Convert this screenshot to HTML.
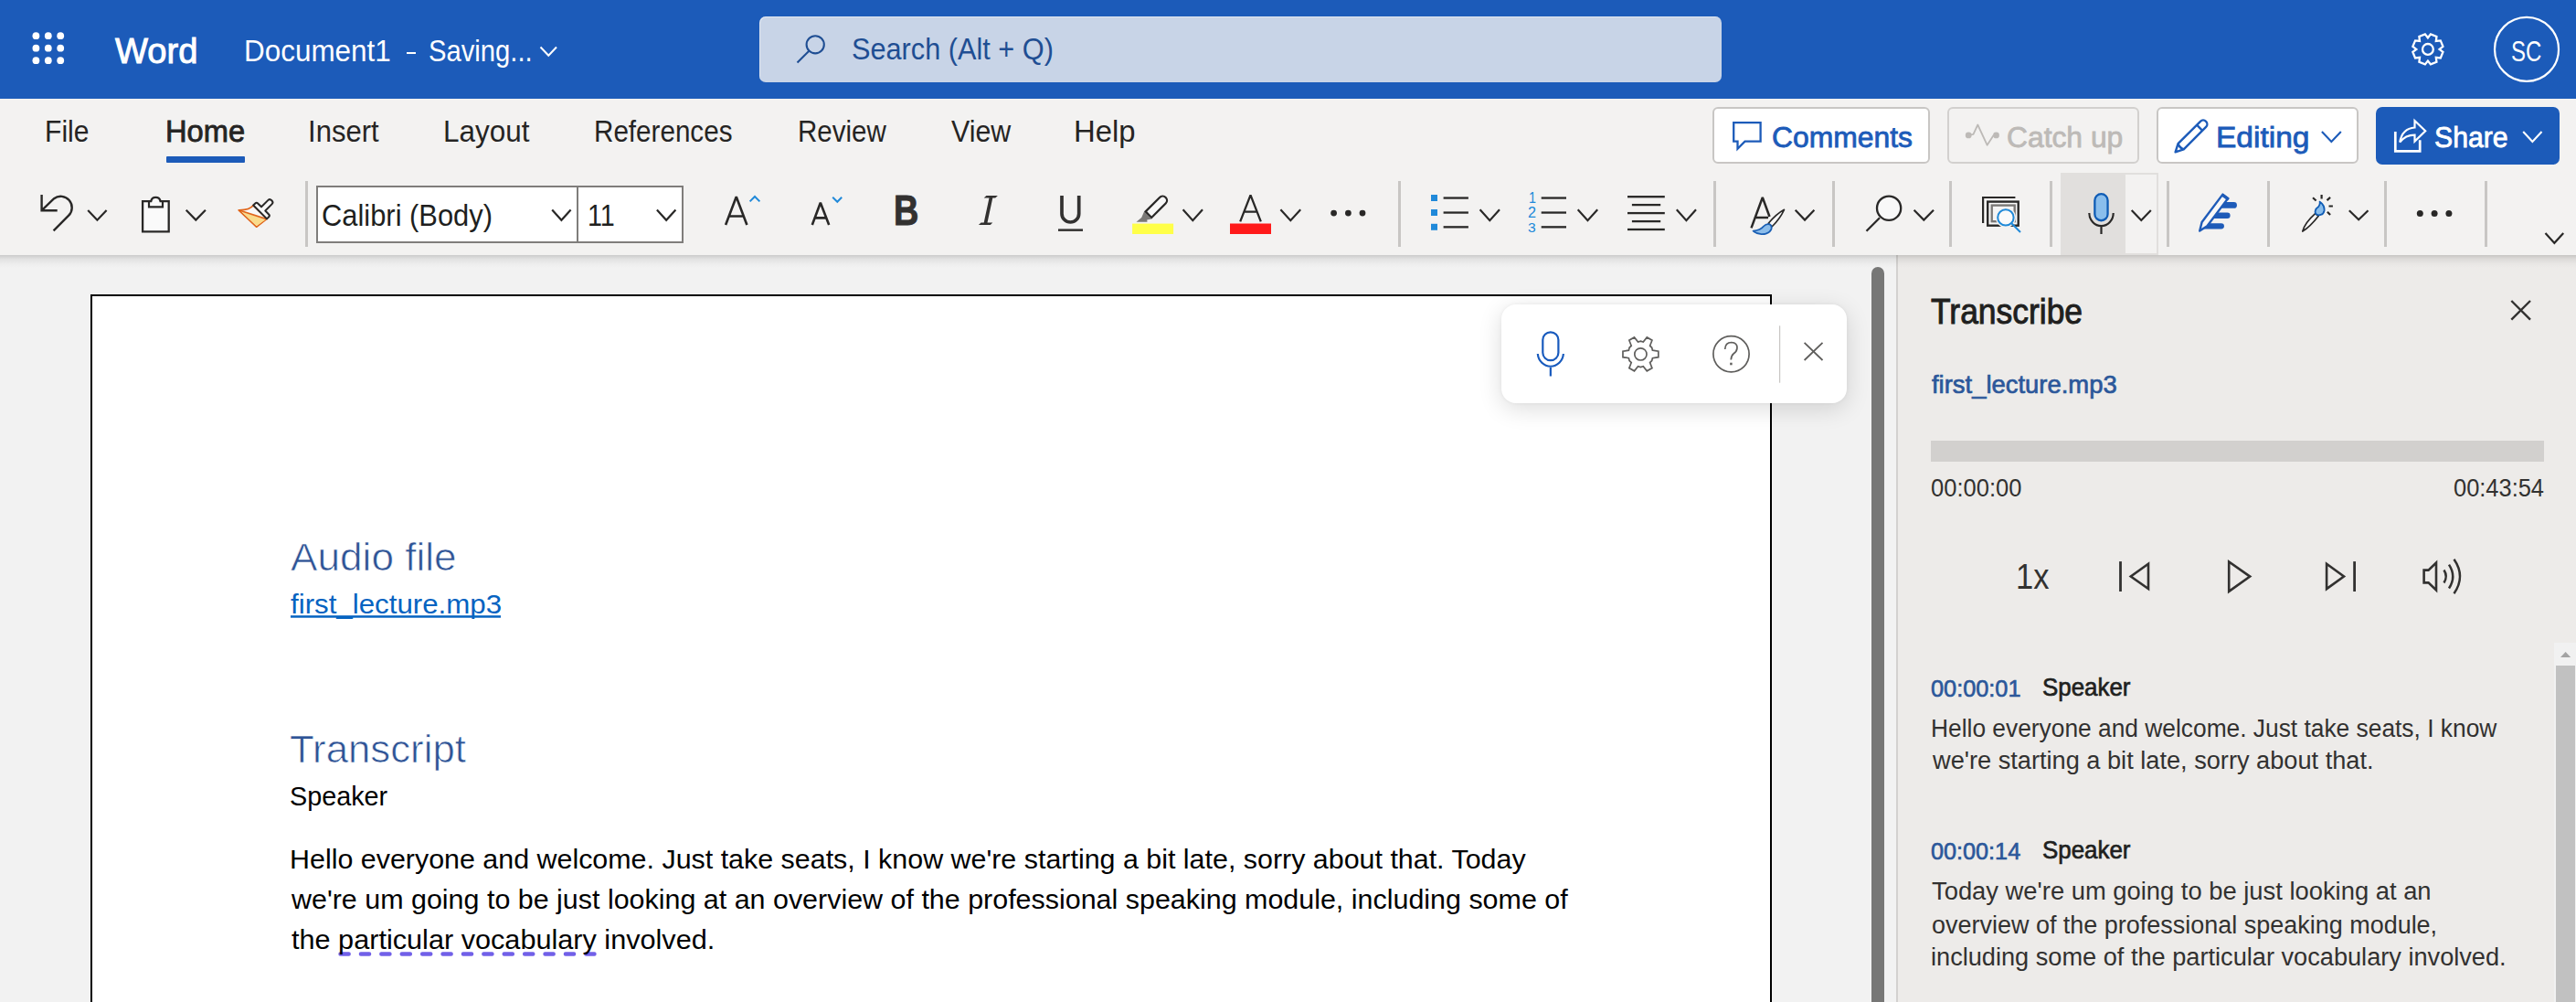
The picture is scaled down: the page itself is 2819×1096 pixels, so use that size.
<!DOCTYPE html><html><head><meta charset="utf-8"><style>
html,body{margin:0;padding:0;}
body{width:2819px;height:1096px;overflow:hidden;position:relative;background:#f2f2f2;font-family:'Liberation Sans',sans-serif;}
.t{position:absolute;white-space:nowrap;transform-origin:0 0;}
.abs{position:absolute;}
svg{position:absolute;left:0;top:0;overflow:visible;}
</style></head><body>
<div class="abs" style="left:0;top:0;width:2819px;height:108px;background:#1c5bb9"></div>
<div class="abs" style="left:0;top:108px;width:2819px;height:171px;background:#f3f2f1;z-index:2"></div>
<div class="abs" style="left:0;top:279px;width:2819px;height:14px;background:linear-gradient(rgba(0,0,0,0.16),rgba(0,0,0,0.07) 30%,rgba(0,0,0,0.02) 70%,rgba(0,0,0,0));z-index:3"></div>
<div class="abs" style="left:831px;top:18px;width:1053px;height:72px;background:#c8d4e7;border-radius:7px;box-shadow:inset 1px 1px 0 rgba(255,255,255,0.45)"></div>
<div class="abs" style="left:99px;top:322px;width:1836px;height:800px;background:#fff;border:2px solid #000;"></div>
<div class="abs" style="left:2075px;top:279px;width:744px;height:817px;background:#edebe9;border-left:2px solid #d3d1cf;box-sizing:border-box"></div>
<div class="abs" style="left:2048px;top:292px;width:14px;height:820px;background:#777776;border-radius:7px"></div>
<div class="abs" style="left:1643px;top:333px;width:378px;height:108px;background:#fff;border-radius:16px;box-shadow:0 6px 26px rgba(0,0,0,0.14),0 0 4px rgba(0,0,0,0.05);z-index:3"></div>
<div class="abs" style="left:2113px;top:482px;width:671px;height:23px;background:#d2d0ce"></div>
<div class="abs" style="left:2795px;top:703px;width:24px;height:400px;background:#f1f1f1"></div>
<div class="abs" style="left:2797px;top:728px;width:21px;height:400px;background:#c1c1c1"></div>
<div class="abs" style="left:0;top:0;z-index:4"><div class="abs" style="left:182px;top:171px;width:86px;height:7px;background:#1c5bb9;border-radius:1px"></div><div class="abs" style="left:1874px;top:117px;width:238px;height:62px;background:#fff;border:2px solid #c8c6c4;border-radius:6px;box-sizing:border-box"></div><div class="abs" style="left:2131px;top:117px;width:210px;height:62px;background:#f3f2f1;border:2px solid #d2d0ce;border-radius:6px;box-sizing:border-box"></div><div class="abs" style="left:2360px;top:117px;width:221px;height:62px;background:#fff;border:2px solid #c8c6c4;border-radius:6px;box-sizing:border-box"></div><div class="abs" style="left:2600px;top:117px;width:201px;height:63px;background:#1c5bb9;border-radius:7px"></div><div class="abs" style="left:346px;top:203px;width:402px;height:63px;background:#fff;border:2px solid #7f7d7b;box-sizing:border-box"></div><div class="abs" style="left:631px;top:203px;width:2px;height:63px;background:#7f7d7b"></div><div class="abs" style="left:2255px;top:189px;width:107px;height:90px;background:#e1dfdd"></div><div class="abs" style="left:2326px;top:191px;width:34px;height:86px;background:#f3f2f1"></div><div class="abs" style="left:333.7px;top:198px;width:3px;height:72px;background:#c8c6c4"></div><div class="abs" style="left:1529.8px;top:198px;width:3px;height:72px;background:#c8c6c4"></div><div class="abs" style="left:1874.9px;top:198px;width:3px;height:72px;background:#c8c6c4"></div><div class="abs" style="left:2004.9px;top:198px;width:3px;height:72px;background:#c8c6c4"></div><div class="abs" style="left:2132.5px;top:198px;width:3px;height:72px;background:#c8c6c4"></div><div class="abs" style="left:2243.0px;top:198px;width:3px;height:72px;background:#c8c6c4"></div><div class="abs" style="left:2370.5px;top:198px;width:3px;height:72px;background:#c8c6c4"></div><div class="abs" style="left:2480.9px;top:198px;width:3px;height:72px;background:#c8c6c4"></div><div class="abs" style="left:2608.5px;top:198px;width:3px;height:72px;background:#c8c6c4"></div><div class="abs" style="left:2718.8px;top:198px;width:3px;height:72px;background:#c8c6c4"></div></div>
<svg width="2819" height="1096" style="z-index:5"><circle cx="39.4" cy="39.2" r="3.9" fill="#fff"/><circle cx="39.4" cy="52.7" r="3.9" fill="#fff"/><circle cx="39.4" cy="66.2" r="3.9" fill="#fff"/><circle cx="52.8" cy="39.2" r="3.9" fill="#fff"/><circle cx="52.8" cy="52.7" r="3.9" fill="#fff"/><circle cx="52.8" cy="66.2" r="3.9" fill="#fff"/><circle cx="66.2" cy="39.2" r="3.9" fill="#fff"/><circle cx="66.2" cy="52.7" r="3.9" fill="#fff"/><circle cx="66.2" cy="66.2" r="3.9" fill="#fff"/><path d="M591.5,51.5 L600.25,60.8 L609,51.5" fill="none" stroke="#fff" stroke-width="2"/><circle cx="892.2" cy="48.8" r="9.6" fill="none" stroke="#1f4e93" stroke-width="2.1"/><path d="M885.3,55.7 L872.5,68.5" stroke="#1f4e93" stroke-width="2.1"/><path d="M2669.50,53.90 L2673.42,56.96 L2670.75,63.42 L2665.81,62.81 L2666.42,67.75 L2659.96,70.42 L2656.90,66.50 L2653.84,70.42 L2647.38,67.75 L2647.99,62.81 L2643.05,63.42 L2640.38,56.96 L2644.30,53.90 L2640.38,50.84 L2643.05,44.38 L2647.99,44.99 L2647.38,40.05 L2653.84,37.38 L2656.90,41.30 L2659.96,37.38 L2666.42,40.05 L2665.81,44.99 L2670.75,44.38 L2673.42,50.84 Z" fill="none" stroke="#fff" stroke-width="2.3" stroke-linejoin="miter"/><circle cx="2656.9" cy="53.9" r="5.9" fill="none" stroke="#fff" stroke-width="2.3"/><circle cx="2765" cy="53.9" r="35" fill="none" stroke="#fff" stroke-width="2.2"/><path d="M45.6,213 V230.2 H62.7 M46.2,229.6 L59.1,217.2 A12.3,12.3 0 0 1 75.2,235.7 L58.6,252.3" fill="none" stroke="#292827" stroke-width="2.4"/><path d="M96.2,230 L106.4,240.7 L116.6,230" fill="none" stroke="#292827" stroke-width="2.2"/><path d="M156.1,253.3 V220.2 H165.2 A5.3,5.3 0 0 1 175.6,220.2 H184.7 V253.3 Z" fill="#fafafa" stroke="#292827" stroke-width="2.3" stroke-linejoin="miter"/><path d="M163,221 V226.3 H178 V221" fill="none" stroke="#292827" stroke-width="2.2"/><path d="M203.7,229.8 L214.3,240.6 L224.9,229.8" fill="none" stroke="#292827" stroke-width="2.2"/><g transform="translate(287.1,229.5) rotate(45)"><path d="M-10.5,3.5 Q-9.3,10 -18.1,18.5 L8.6,17.8 L10.5,3.5 Z" fill="#f8f8f8" stroke="#e0661b" stroke-width="1.8" stroke-linejoin="round"/><path d="M-15.5,17.6 L9.9,5.2 L8.2,17 Z" fill="#f9db8b"/><path d="M-17.5,18.2 L10.3,4" stroke="#e0661b" stroke-width="1.8"/><path d="M-10.5,3.5 V0.5 Q-10.5,-1.5 -8.5,-1.5 H-3 V-12 Q-3,-14.5 0,-14.5 Q3,-14.5 3,-12 V-1.5 H8.5 Q10.5,-1.5 10.5,0.5 V3.5 Z" fill="#f8f8f8" stroke="#292827" stroke-width="2" stroke-linejoin="round"/></g><path d="M794.1,246 L805.75,215.2 L817.4,246 M797.6,236.5 H814" fill="none" stroke="#292827" stroke-width="2.6" stroke-linejoin="bevel"/><path d="M820.6,220.4 L826,215 L831.4,220.4" fill="none" stroke="#2089d9" stroke-width="2"/><path d="M888.8,246 L897.85,221.8 L907.2,246 M891.6,238.4 H904.4" fill="none" stroke="#292827" stroke-width="2.6" stroke-linejoin="bevel"/><path d="M911.2,215.8 L916.3,220.8 L921.2,215.8" fill="none" stroke="#2089d9" stroke-width="2"/><path d="M1079.4,213.9 L1091.9,213.9 L1089.2,216.6 L1086.3,216.6 L1080.5,243.4 L1086.3,243.4 L1083.8,246.1 L1070.9,246.1 L1073.6,243.4 L1076.7,243.4 L1082.5,216.6 L1076.7,216.6 Z" fill="#323130"/><path d="M1162,213.9 V233.7 A9.35,9.35 0 0 0 1180.7,233.7 V213.9" fill="none" stroke="#323130" stroke-width="3.7"/><rect x="1158" y="250.4" width="27" height="2.5" fill="#323130"/><rect x="1239.1" y="244.6" width="45" height="11.4" fill="#ffff48"/><path d="M1252,231.4 L1249.2,238 L1243.5,242.8 L1255.5,242.8 L1255.2,240.5 L1260.2,239.6 Z" fill="#7a7876"/><g transform="translate(1256.1,235.5) rotate(45)"><path d="M-4.65,-1.15 V-23 A4.65,4.65 0 0 1 4.65,-23 V-1.15 Z" fill="#f8f8f8" stroke="#292827" stroke-width="2.3"/></g><path d="M1294.6,229.2 L1305.3,241.2 L1316,229.2" fill="none" stroke="#292827" stroke-width="2.2"/><path d="M1357.2,242.4 L1368.5,213.4 L1379.8,242.4 M1361.5,231.7 H1375.5" fill="none" stroke="#292827" stroke-width="2.3" stroke-linejoin="bevel"/><rect x="1346" y="244.5" width="45" height="11.5" fill="#ff1a1a"/><path d="M1401.4,229.2 L1412.3000000000002,241.2 L1423.2,229.2" fill="none" stroke="#292827" stroke-width="2.2"/><circle cx="1459.6" cy="233.1" r="3.4" fill="#292827"/><circle cx="1475.4" cy="233.1" r="3.4" fill="#292827"/><circle cx="1491" cy="233.1" r="3.4" fill="#292827"/><rect x="1566" y="213.0" width="7" height="7" fill="#2089d9"/><rect x="1579.6" y="215.4" width="27.3" height="2.3" fill="#292827"/><rect x="1566" y="229.0" width="7" height="7" fill="#2089d9"/><rect x="1579.6" y="231.4" width="27.3" height="2.3" fill="#292827"/><rect x="1566" y="244.8" width="7" height="7" fill="#2089d9"/><rect x="1579.6" y="247.20000000000002" width="27.3" height="2.3" fill="#292827"/><path d="M1619.6,229.2 L1630.3,241.2 L1641,229.2" fill="none" stroke="#292827" stroke-width="2.2"/><rect x="1686.7" y="215.4" width="27.3" height="2.3" fill="#292827"/><rect x="1686.7" y="231.4" width="27.3" height="2.3" fill="#292827"/><rect x="1686.7" y="247.20000000000002" width="27.3" height="2.3" fill="#292827"/><path d="M1726.7,229.2 L1737.45,241.2 L1748.2,229.2" fill="none" stroke="#292827" stroke-width="2.2"/><rect x="1781" y="214.04999999999998" width="40.8" height="2.3" fill="#292827"/><rect x="1785.9" y="222.95" width="31.3" height="2.3" fill="#292827"/><rect x="1781" y="231.95" width="40.8" height="2.3" fill="#292827"/><rect x="1785.9" y="240.95" width="31.3" height="2.3" fill="#292827"/><rect x="1781" y="249.85" width="40.8" height="2.3" fill="#292827"/><path d="M1834.8,229.2 L1845.4,241.2 L1856,229.2" fill="none" stroke="#292827" stroke-width="2.2"/><path d="M1916.5,249.4 L1928.8,216 L1936.5,237 M1920.5,237.9 H1935" fill="none" stroke="#292827" stroke-width="2.5" stroke-linejoin="bevel"/><path d="M1935.2,244.3 Q1944,234 1952.5,229.3 Q1948,239 1939.3,247.7 Z" fill="#f8f8f8" stroke="#292827" stroke-width="1.6" stroke-linejoin="round"/><path d="M1918.6,252.6 Q1926.5,252 1930,247.5 Q1933,244.3 1936.5,245.3 Q1939.6,247 1938.3,251 Q1935.5,256.5 1927.5,256.2 Q1922,255.8 1918.6,252.6 Z" fill="#8cbdea" stroke="#1a5fb4" stroke-width="1.8" stroke-linejoin="round"/><path d="M1964.7,229.8 L1975.0500000000002,240.6 L1985.4,229.8" fill="none" stroke="#292827" stroke-width="2.2"/><circle cx="2067.1" cy="227.7" r="13.1" fill="#f8f8f8" stroke="#292827" stroke-width="2.3"/><path d="M2057,238.2 L2042.5,252.7" stroke="#292827" stroke-width="2.3"/><path d="M2094.6,229.8 L2105.3,240.6 L2116,229.8" fill="none" stroke="#292827" stroke-width="2.2"/><path d="M2170.1,243.9 V216 H2205.4" fill="none" stroke="#292827" stroke-width="2.2"/><rect x="2175.2" y="220.6" width="33.5" height="26.1" fill="#fafafa" stroke="#292827" stroke-width="2.4"/><rect x="2179.7" y="224.6" width="25" height="17.6" fill="#f4f4f4" stroke="#7a7876" stroke-width="2.4"/><circle cx="2194.9" cy="237.9" r="11" fill="#f3f2f1"/><circle cx="2194.9" cy="237.9" r="8.7" fill="#fafafa" stroke="#1f89d8" stroke-width="2"/><path d="M2201.3,244.3 L2211,254" stroke="#1f89d8" stroke-width="2"/><rect x="2292.35" y="212.15" width="14.2" height="29.1" rx="7.1" fill="#8abeec" stroke="#0f5cb5" stroke-width="2.3"/><path d="M2286.3,232.9 A13.2,14.3 0 0 0 2312.7,232.9 M2299.5,247.5 V255.9" fill="none" stroke="#292827" stroke-width="2.2"/><path d="M2332.7,229.9 L2343.25,240.9 L2353.8,229.9" fill="none" stroke="#292827" stroke-width="2.2"/><g fill="#1e5bb8"><path d="M2433,221.1 H2444.6 A3.35,3.35 0 0 1 2444.6,227.8 H2428.5 Z"/><path d="M2425,232.6 H2437.4 A3.2,3.2 0 0 1 2437.4,239 H2420.5 Z"/><path d="M2416.5,244.2 H2430.8 A3.15,3.15 0 0 1 2430.8,250.5 H2412 Z"/></g><path d="M2407.2,252.5 L2409.6,243 L2432.4,212.6 L2438.2,216.9 L2415.4,247.3 Z" fill="#f8f8f8" stroke="#1e5bb8" stroke-width="2.4" stroke-linejoin="round"/><path d="M2431,214.6 L2433,212 L2439.8,217.1 L2437.9,219.6 Z" fill="#1e5bb8"/><path d="M2519.8,253 Q2522,244 2533.6,233.6 L2537.2,236.2 Q2528,248 2519.8,253 Z" fill="#f8f8f8" stroke="#292827" stroke-width="1.7" stroke-linejoin="round"/><path d="M2538.6,220.6 Q2544.3,225 2543.5,230.5 Q2542.3,235.5 2537.2,235.3 Q2533,234.6 2533.7,230.6 Q2534.4,227.8 2537.3,226 Q2539.2,223.5 2538.6,220.6 Z" fill="#8abeec" stroke="#0f5cb5" stroke-width="1.8" stroke-linejoin="round"/><path d="M2540.6,213.1 V217.5 M2531,216.3 L2534.6,219.5 M2550.1,215.9 L2546.5,219.1 M2548.5,225.5 H2552.9 M2546.9,231.8 L2550.1,235" stroke="#292827" stroke-width="2.2"/><path d="M2570.8,230.2 L2581.15,240.2 L2591.5,230.2" fill="none" stroke="#292827" stroke-width="2.2"/><circle cx="2648.3" cy="233.4" r="3.5" fill="#292827"/><circle cx="2664.1" cy="233.4" r="3.5" fill="#292827"/><circle cx="2679.9" cy="233.4" r="3.5" fill="#292827"/><path d="M2785.5,255 L2795.35,265.8 L2805.2,255" fill="none" stroke="#292827" stroke-width="2.2"/><path d="M604.2,229.4 L614.4000000000001,240.8 L624.6,229.4" fill="none" stroke="#292827" stroke-width="2.2"/><path d="M718.9,229.4 L729.15,240.8 L739.4,229.4" fill="none" stroke="#292827" stroke-width="2.2"/><path d="M1897.2,134.2 H1926.6 V154.7 H1909.5 L1901.5,162.7 V154.7 H1897.2 Z" fill="none" stroke="#1c5bb9" stroke-width="2.3"/><path d="M2154.2,147.9 L2159.5,146.9 L2164.3,136.5 L2174.6,158.7 L2181.6,148.1 L2184.5,147.9" fill="none" stroke="#bdbab7" stroke-width="1.8" stroke-linejoin="round"/><circle cx="2154.2" cy="147.9" r="3.4" fill="#bdbab7"/><circle cx="2184.5" cy="147.9" r="3.4" fill="#bdbab7"/><g transform="translate(2380.6,166.3) rotate(45)"><path d="M0,0 L-4.35,-8.5 V-43 A4.35,4.35 0 0 1 4.35,-43 V-8.5 Z M-4.35,-8.5 Q0,-6.5 4.35,-8.5 M-4.35,-37.5 H4.35" fill="none" stroke="#1c5bb9" stroke-width="2.4" stroke-linejoin="round"/></g><path d="M2540.9,144 L2551.3500000000004,155 L2561.8,144" fill="none" stroke="#1c5bb9" stroke-width="2.1"/><path d="M2621.3,143.9 V165.3 H2648.2 V153.2" fill="none" stroke="#fff" stroke-width="2.7"/><path d="M2626.2,155.5 C2628,145.5 2634,140 2642.5,139.5 V132 L2654.2,143.2 L2642.5,154.6 V147.6 C2636,147.6 2630.5,150 2626.2,155.5 Z" fill="none" stroke="#fff" stroke-width="2.2" stroke-linejoin="miter"/><path d="M2761.2,144 L2771.35,155 L2781.5,144" fill="none" stroke="#fff" stroke-width="2.1"/></svg>
<svg width="2819" height="1096" style="z-index:6"><rect x="1688.3" y="363.3" width="17.1" height="30.9" rx="8.55" fill="none" stroke="#185abd" stroke-width="2.2"/><path d="M1682.8,387 A14.1,15 0 0 0 1710.9,387 M1696.85,402 V411.5" fill="none" stroke="#185abd" stroke-width="2.2"/><path d="M1808.43,383.17 L1814.83,384.15 L1814.83,390.65 L1808.43,391.63 L1807.70,394.50 L1805.58,396.57 L1807.93,402.60 L1802.30,405.85 L1798.25,400.80 L1795.40,401.60 L1792.55,400.80 L1788.50,405.85 L1782.87,402.60 L1785.22,396.57 L1783.10,394.50 L1782.37,391.63 L1775.97,390.65 L1775.97,384.15 L1782.37,383.17 L1783.10,380.30 L1785.22,378.23 L1782.87,372.20 L1788.50,368.95 L1792.55,374.00 L1795.40,373.20 L1798.25,374.00 L1802.30,368.95 L1807.93,372.20 L1805.58,378.23 L1807.70,380.30 Z" fill="none" stroke="#5f5e5c" stroke-width="1.7" stroke-linejoin="miter"/><circle cx="1795.4" cy="387.4" r="6.6" fill="none" stroke="#5f5e5c" stroke-width="1.7"/><circle cx="1894.5" cy="387.3" r="19.6" fill="none" stroke="#5f5e5c" stroke-width="1.7"/><path d="M1887.7,382 Q1888,374.5 1894.8,374.5 Q1901.2,374.8 1901,380.6 Q1900.7,384.5 1897,387 Q1894.5,389 1894.3,393.5" fill="none" stroke="#5f5e5c" stroke-width="1.7"/><rect x="1893.2" y="396.7" width="2.4" height="2.6" fill="#5f5e5c"/><rect x="1947" y="356.3" width="1.2" height="62.4" fill="#c8c6c4"/><path d="M1974.6,374.9 L1994.5,394 M1994.5,374.9 L1974.6,394" stroke="#5f5e5c" stroke-width="1.8"/></svg>
<svg width="2819" height="1096" style="z-index:4"><path d="M2748.3,329 L2769,349.7 M2769,329 L2748.3,349.7" stroke="#323130" stroke-width="2.4"/><path d="M2320.5,614.1 V647" stroke="#323130" stroke-width="2.8"/><path d="M2351,616.8 V644.1 L2331.8,630.5 Z" fill="none" stroke="#323130" stroke-width="2.6" stroke-linejoin="miter"/><path d="M2439.2,614.4 V646.9 L2462.2,630.6 Z" fill="none" stroke="#323130" stroke-width="2.6"/><path d="M2546.1,616.8 V644.1 L2565,630.5 Z" fill="none" stroke="#323130" stroke-width="2.6"/><path d="M2576.6,614.1 V647" stroke="#323130" stroke-width="2.8"/><path d="M2666,615.5 V645.5 L2657.5,637.4 H2652.6 V623.6 H2657.5 Z" fill="none" stroke="#323130" stroke-width="2.6" stroke-linejoin="miter"/><path d="M2674.5,623.5 Q2679,630.5 2674.5,637.5 M2680,617.6 Q2688.5,630.5 2680,643.5 M2685.5,611.8 Q2698.5,630.5 2685.5,649.3" fill="none" stroke="#323130" stroke-width="2.5"/><path d="M2802,719 L2807.6,713 L2813.2,719 Z" fill="#a3a3a3"/><path d="M372.5,1043.5 H656" stroke="#7160e8" stroke-width="4.4" stroke-dasharray="9.2 13.2" stroke-linecap="round"/><rect x="318" y="673.2" width="230" height="2.5" fill="#0563c1"/></svg>
<div class="abs" style="left:0;top:0;z-index:7"><div class="t" style="left:126.0px;top:36.2px;font-size:39.68px;line-height:39.68px;font-weight:400;color:#fff;transform:scaleX(0.9609);-webkit-text-stroke:0.99px #fff;">Word</div><div class="t" style="left:266.5px;top:39.6px;font-size:32.85px;line-height:32.85px;font-weight:400;color:#fff;transform:scaleX(0.9577);">Document1</div><div class="t" style="left:468.7px;top:39.6px;font-size:32.85px;line-height:32.85px;font-weight:400;color:#fff;transform:scaleX(0.8902);">Saving...</div><div class="abs" style="left:445px;top:56.9px;width:9.5px;height:2.3px;background:#fff"></div><div class="t" style="left:931.8px;top:38.4px;font-size:32.56px;line-height:32.56px;font-weight:400;color:#1f4e93;transform:scaleX(0.9429);">Search (Alt + Q)</div><div class="t" style="left:2747.7px;top:41.2px;font-size:31.5px;line-height:31.5px;font-weight:400;color:#fff;transform:scaleX(0.761);">SC</div><div class="t" style="left:48.7px;top:127.4px;font-size:33.14px;line-height:33.14px;font-weight:400;color:#252423;transform:scaleX(0.9082);">File</div><div class="t" style="left:337.0px;top:127.4px;font-size:33.14px;line-height:33.14px;font-weight:400;color:#252423;transform:scaleX(0.9375);">Insert</div><div class="t" style="left:485.4px;top:127.4px;font-size:33.14px;line-height:33.14px;font-weight:400;color:#252423;transform:scaleX(0.949);">Layout</div><div class="t" style="left:650.1px;top:126.8px;font-size:33.87px;line-height:33.87px;font-weight:400;color:#252423;transform:scaleX(0.8746);">References</div><div class="t" style="left:872.7px;top:126.8px;font-size:33.87px;line-height:33.87px;font-weight:400;color:#252423;transform:scaleX(0.8722);">Review</div><div class="t" style="left:1040.9px;top:126.8px;font-size:33.87px;line-height:33.87px;font-weight:400;color:#252423;transform:scaleX(0.8973);">View</div><div class="t" style="left:1174.9px;top:126.8px;font-size:33.87px;line-height:33.87px;font-weight:400;color:#252423;transform:scaleX(0.9708);">Help</div><div class="t" style="left:181.3px;top:127.4px;font-size:33.14px;line-height:33.14px;font-weight:400;color:#252423;transform:scaleX(0.9849);-webkit-text-stroke:0.83px #252423;">Home</div><div class="t" style="left:1938.5px;top:134.0px;font-size:31.98px;line-height:31.98px;font-weight:400;color:#1c5bb9;transform:scaleX(0.9967);-webkit-text-stroke:0.80px #1c5bb9;">Comments</div><div class="t" style="left:2195.9px;top:134.0px;font-size:31.98px;line-height:31.98px;font-weight:400;color:#bdbab7;transform:scaleX(0.9944);-webkit-text-stroke:0.80px #bdbab7;">Catch up</div><div class="t" style="left:2424.7px;top:134.0px;font-size:31.98px;line-height:31.98px;font-weight:400;color:#1c5bb9;transform:scaleX(1.0479);-webkit-text-stroke:0.80px #1c5bb9;">Editing</div><div class="t" style="left:2664.4px;top:134.0px;font-size:31.98px;line-height:31.98px;font-weight:400;color:#fff;transform:scaleX(0.944);-webkit-text-stroke:0.80px #fff;">Share</div><div class="t" style="left:351.6px;top:219.1px;font-size:33.72px;line-height:33.72px;font-weight:400;color:#201f1e;transform:scaleX(0.9155);">Calibri (Body)</div><div class="t" style="left:643.3px;top:219.1px;font-size:33.24px;line-height:33.24px;font-weight:400;color:#201f1e;transform:scaleX(0.8645);">11</div><div class="t" style="left:977.6px;top:207.1px;font-size:46.8px;line-height:46.8px;font-weight:700;color:#323130;transform:scaleX(0.8103);-webkit-text-stroke:1px #323130;">B</div><div class="t" style="left:1672.6px;top:209.2px;font-size:15.9px;line-height:15.9px;font-weight:400;color:#2089d9;transform:scaleX(0.9);">1</div><div class="t" style="left:1672.0px;top:225.0px;font-size:15.76px;line-height:15.76px;font-weight:400;color:#2089d9;transform:scaleX(1.0286);">2</div><div class="t" style="left:1672.0px;top:240.5px;font-size:15.19px;line-height:15.19px;font-weight:400;color:#2089d9;transform:scaleX(1.0286);">3</div><div class="t" style="left:318.0px;top:587.7px;font-size:43.31px;line-height:43.31px;font-weight:400;color:#2f5496;transform:scaleX(1.0199);-webkit-text-stroke:0.7px #fff;">Audio file</div><div class="t" style="left:318.0px;top:645.7px;font-size:29.95px;line-height:29.95px;font-weight:400;color:#0563c1;transform:scaleX(1.0445);">first_lecture.mp3</div><div class="t" style="left:317.0px;top:797.7px;font-size:43.31px;line-height:43.31px;font-weight:400;color:#2f5496;transform:scaleX(1.0105);-webkit-text-stroke:0.7px #fff;">Transcript</div><div class="t" style="left:317.0px;top:855.9px;font-size:30.09px;line-height:30.09px;font-weight:400;color:#000;transform:scaleX(0.9568);">Speaker</div><div class="t" style="left:317.4px;top:923.8px;font-size:30.38px;line-height:30.38px;font-weight:400;color:#000;transform:scaleX(1.0013);">Hello everyone and welcome. Just take seats, I know we're starting a bit late, sorry about that. Today</div><div class="t" style="left:319.4px;top:967.5px;font-size:30.38px;line-height:30.38px;font-weight:400;color:#000;transform:scaleX(1.0021);">we're um going to be just looking at an overview of the professional speaking module, including some of</div><div class="t" style="left:319.4px;top:1011.6px;font-size:30.38px;line-height:30.38px;font-weight:400;color:#000;transform:scaleX(1.0088);">the particular vocabulary involved.</div><div class="t" style="left:2113.2px;top:322.2px;font-size:38.52px;line-height:38.52px;font-weight:400;color:#201f1e;transform:scaleX(0.9201);-webkit-text-stroke:0.96px #201f1e;">Transcribe</div><div class="t" style="left:2114.0px;top:407.0px;font-size:27.6px;line-height:27.6px;font-weight:400;color:#2b579a;transform:scaleX(0.9936);-webkit-text-stroke:0.69px #2b579a;">first_lecture.mp3</div><div class="t" style="left:2113.1px;top:519.6px;font-size:27.08px;line-height:27.08px;font-weight:400;color:#323130;transform:scaleX(0.9427);">00:00:00</div><div class="t" style="left:2684.7px;top:519.6px;font-size:27.08px;line-height:27.08px;font-weight:400;color:#323130;transform:scaleX(0.9394);">00:43:54</div><div class="t" style="left:2205.7px;top:611.1px;font-size:39.11px;line-height:39.11px;font-weight:400;color:#323130;transform:scaleX(0.8816);">1x</div><div class="t" style="left:2113.0px;top:741.2px;font-size:25.93px;line-height:25.93px;font-weight:400;color:#2b579a;transform:scaleX(0.9758);-webkit-text-stroke:0.65px #2b579a;">00:00:01</div><div class="t" style="left:2234.6px;top:739.1px;font-size:27.03px;line-height:27.03px;font-weight:400;color:#201f1e;transform:scaleX(0.958);-webkit-text-stroke:0.68px #201f1e;">Speaker</div><div class="t" style="left:2113.0px;top:918.5px;font-size:25.07px;line-height:25.07px;font-weight:400;color:#2b579a;transform:scaleX(1.0062);-webkit-text-stroke:0.63px #2b579a;">00:00:14</div><div class="t" style="left:2234.6px;top:917.1px;font-size:27.03px;line-height:27.03px;font-weight:400;color:#201f1e;transform:scaleX(0.958);-webkit-text-stroke:0.68px #201f1e;">Speaker</div><div class="t" style="left:2112.9px;top:782.7px;font-size:27.18px;line-height:27.18px;font-weight:400;color:#323130;transform:scaleX(0.9694);">Hello everyone and welcome. Just take seats, I know</div><div class="t" style="left:2114.8px;top:818.1px;font-size:27.18px;line-height:27.18px;font-weight:400;color:#323130;transform:scaleX(1.0002);">we're starting a bit late, sorry about that.</div><div class="t" style="left:2113.8px;top:961.4px;font-size:27.18px;line-height:27.18px;font-weight:400;color:#323130;transform:scaleX(1.0067);">Today we're um going to be just looking at an</div><div class="t" style="left:2113.8px;top:997.5px;font-size:27.18px;line-height:27.18px;font-weight:400;color:#323130;transform:scaleX(0.9924);">overview of the professional speaking module,</div><div class="t" style="left:2112.8px;top:1032.8px;font-size:27.18px;line-height:27.18px;font-weight:400;color:#323130;transform:scaleX(0.9997);">including some of the particular vocabulary involved.</div></div>
</body></html>
